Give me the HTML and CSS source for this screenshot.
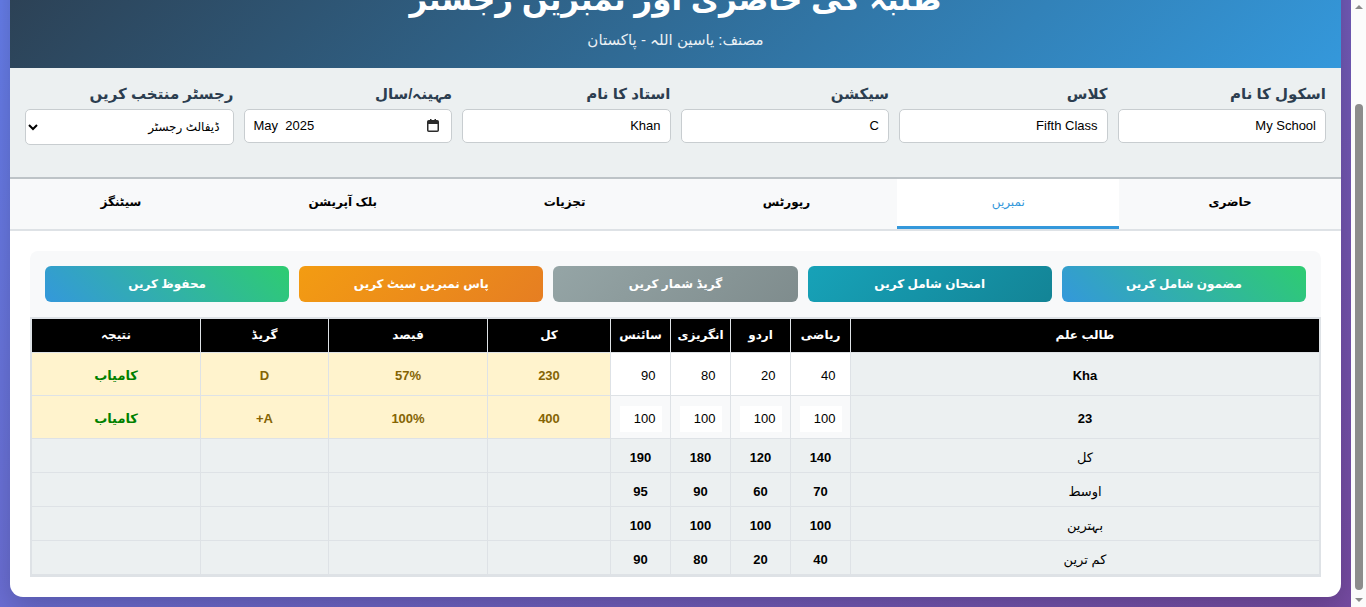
FILE: index.html
```html
<!DOCTYPE html>
<html lang="ur" dir="rtl">
<head>
<meta charset="utf-8">
<title>طلبہ کی حاضری اور نمبریں رجسٹر</title>
<link rel="stylesheet" href="styles.css">
</head>
<body>
<div class="viewport">
<div class="container">
  <header class="header">
    <h1>طلبہ کی حاضری اور نمبریں رجسٹر</h1>
    <p>مصنف: یاسین اللہ - پاکستان</p>
  </header>

  <section class="form-section">
    <div class="form-grid">
      <div class="form-group"><label>اسکول کا نام</label><input type="text" value="My School"></div>
      <div class="form-group"><label>کلاس</label><input type="text" value="Fifth Class"></div>
      <div class="form-group"><label>سیکشن</label><input type="text" value="C"></div>
      <div class="form-group"><label>استاد کا نام</label><input type="text" value="Khan"></div>
      <div class="form-group"><label>مہینہ/سال</label>
        <div class="month-field" dir="ltr"><span>May&nbsp; 2025</span>
          <svg class="cal" width="12" height="13" viewBox="0 0 12 13"><rect x="0.75" y="1.75" width="10.5" height="10.5" rx="1" fill="none" stroke="#2b2b2b" stroke-width="1.5"/><rect x="1" y="2" width="10" height="3" fill="#2b2b2b"/><rect x="3" y="0" width="1.5" height="3" fill="#2b2b2b"/><rect x="7.5" y="0" width="1.5" height="3" fill="#2b2b2b"/></svg>
        </div>
      </div>
      <div class="form-group"><label>رجسٹر منتخب کریں</label><select><option>ڈیفالٹ رجسٹر</option></select></div>
    </div>
  </section>

  <nav class="tabs">
    <button class="tab">حاضری</button>
    <button class="tab active">نمبریں</button>
    <button class="tab">رپورٹس</button>
    <button class="tab">تجزیات</button>
    <button class="tab">بلک آپریشن</button>
    <button class="tab">سیٹنگز</button>
  </nav>

  <main class="content">
    <div class="toolbar">
      <button class="btn btn-success">مضمون شامل کریں</button>
      <button class="btn btn-info">امتحان شامل کریں</button>
      <button class="btn btn-grey">گریڈ شمار کریں</button>
      <button class="btn btn-warning">پاس نمبریں سیٹ کریں</button>
      <button class="btn btn-success">محفوظ کریں</button>
    </div>

    <div class="table-wrap">
      <table class="marks">
        <colgroup>
          <col class="c-name"><col class="c-sub"><col class="c-sub"><col class="c-sub"><col class="c-sub">
          <col class="c-total"><col class="c-pct"><col class="c-grade"><col class="c-result">
        </colgroup>
        <thead>
          <tr><th>طالب علم</th><th>ریاضی</th><th>اردو</th><th>انگریزی</th><th>سائنس</th><th>کل</th><th>فیصد</th><th>گریڈ</th><th>نتیجہ</th></tr>
        </thead>
        <tbody>
          <tr class="data">
            <td class="name">Kha</td>
            <td class="mark"><input value="40"></td>
            <td class="mark"><input value="20"></td>
            <td class="mark"><input value="80"></td>
            <td class="mark"><input value="90"></td>
            <td class="calc">230</td><td class="calc">57%</td><td class="calc">D</td><td class="calc pass">کامیاب</td>
          </tr>
          <tr class="data even">
            <td class="name">23</td>
            <td class="mark"><input value="100"></td>
            <td class="mark"><input value="100"></td>
            <td class="mark"><input value="100"></td>
            <td class="mark"><input value="100"></td>
            <td class="calc">400</td><td class="calc">100%</td><td class="calc">A+</td><td class="calc pass">کامیاب</td>
          </tr>
          <tr class="summary"><td class="label">کل</td><td>140</td><td>120</td><td>180</td><td>190</td><td></td><td></td><td></td><td></td></tr>
          <tr class="summary"><td class="label">اوسط</td><td>70</td><td>60</td><td>90</td><td>95</td><td></td><td></td><td></td><td></td></tr>
          <tr class="summary"><td class="label">بہترین</td><td>100</td><td>100</td><td>100</td><td>100</td><td></td><td></td><td></td><td></td></tr>
          <tr class="summary"><td class="label">کم ترین</td><td>40</td><td>20</td><td>80</td><td>90</td><td></td><td></td><td></td><td></td></tr>
        </tbody>
      </table>
    </div>
  </main>
</div>
</div>
<div class="scrollbar" dir="ltr">
  <div class="arrow up"></div>
  <div class="track"><div class="thumb"></div></div>
  <div class="arrow down"></div>
</div>
</body>
</html>
```

FILE: styles.css
```css
* { box-sizing: border-box; }

html, body { margin: 0; height: 100%; }

body {
  font-family: "Liberation Sans", "DejaVu Sans", sans-serif;
  color: #2c3e50;
  display: flex;
  flex-direction: row-reverse;
  overflow: hidden;
}

.viewport {
  flex: 1;
  display: flex;
  flex-direction: column;
  justify-content: flex-end;
  overflow: hidden;
  padding: 10px;
  background: linear-gradient(135deg, #667eea 0%, #764ba2 100%);
}

.scrollbar {
  width: 15px;
  flex: none;
  background: #fbfbfb;
  display: flex;
  flex-direction: column;
  align-items: center;
}
.scrollbar .arrow {
  width: 0;
  height: 0;
  border-left: 4px solid transparent;
  border-right: 4px solid transparent;
  margin: 5px 0;
}
.scrollbar .arrow.up { border-bottom: 4px solid #8a8a8a; }
.scrollbar .arrow.down { border-top: 4px solid #8a8a8a; }
.scrollbar .track {
  flex: 1;
  width: 100%;
  display: flex;
  flex-direction: column;
  justify-content: flex-end;
  align-items: center;
  padding-bottom: 3px;
}
.scrollbar .thumb {
  width: 8px;
  height: 486px;
  border-radius: 4px;
  background: #8c8c8c;
}

.container {
  flex: none;
  background: #fff;
  border-radius: 13px;
  overflow: hidden;
  box-shadow: 0 10px 30px rgba(0,0,0,0.2);
}

.header {
  background: linear-gradient(135deg, #2c3e50 0%, #3498db 100%);
  color: #fff;
  text-align: center;
  padding: 40px 20px 19px;
}
.header h1 {
  margin: 0 0 13px;
  font-size: 31px;
  font-weight: bold;
}
.header p {
  margin: 0;
  font-size: 15px;
  opacity: 0.9;
}

.form-section {
  background: #ecf0f1;
  padding: 15px 15px 17px;
  border-bottom: 2px solid #bdc3c7;
}
.form-grid {
  display: grid;
  grid-template-columns: repeat(6, 1fr);
  gap: 10px;
}
.form-group {
  display: flex;
  flex-direction: column;
  margin-bottom: 15px;
}
.form-group label {
  font-weight: bold;
  font-size: 15px;
  color: #2c3e50;
  margin-bottom: 4px;
  line-height: 22px;
}
.form-group input,
.form-group select,
.month-field {
  height: 34px;
  border: 1px solid #c8cdd0;
  border-radius: 5px;
  background: #fff;
  padding: 0 9px;
  font-family: "Liberation Sans", "DejaVu Sans", sans-serif;
  font-size: 13px;
  color: #000;
}
.form-group select { height: 36px; font-size: 12px; }
.month-field {
  display: flex;
  align-items: center;
  justify-content: space-between;
  padding: 0 12px 0 9px;
}
.month-field .cal { display: block; }

.tabs {
  display: flex;
  background: #f8f9fa;
  border-bottom: 2px solid #dee2e6;
}
.tab {
  flex: 1;
  height: 50px;
  border: none;
  border-bottom: 3px solid transparent;
  background: transparent;
  font-family: "Liberation Sans", "DejaVu Sans", sans-serif;
  font-size: 12px;
  font-weight: bold;
  color: #000;
  padding: 0;
}
.tab.active {
  background: #fff;
  color: #3498db;
  font-weight: normal;
  border-bottom-color: #3498db;
}

.content { padding: 20px; }

.toolbar {
  display: grid;
  grid-template-columns: repeat(5, 1fr);
  gap: 10px;
  background: #f8f9fa;
  padding: 15px;
  border-radius: 8px 8px 0 0;
}
.btn {
  height: 36px;
  border: none;
  border-radius: 6px;
  color: #fff;
  font-family: "Liberation Sans", "DejaVu Sans", sans-serif;
  font-size: 12px;
  font-weight: bold;
}
.btn-success { background: linear-gradient(45deg, #3498db, #2ecc71); }
.btn-info { background: linear-gradient(135deg, #17a2b8, #138496); }
.btn-grey { background: linear-gradient(135deg, #95a5a6, #7f8c8d); }
.btn-warning { background: linear-gradient(135deg, #f39c12, #e67e22); }

.table-wrap {
  border: 2px solid #dee2e6;
  border-left-width: 1px;
  border-right-width: 1px;
}
.marks {
  width: 100%;
  border-collapse: collapse;
  table-layout: fixed;
  font-size: 13px;
}
.c-name { width: 469px; }
.c-sub { width: 60px; }
.c-total { width: 123px; }
.c-pct { width: 159px; }
.c-grade { width: 128px; }
.c-result { width: 169px; }

.marks th {
  background: #000;
  color: #fff;
  height: 34px;
  font-weight: bold;
  font-size: 12px;
  border: 1px solid #dee2e6;
  border-top: none;
  padding: 0 6px;
}
.marks td {
  border: 1px solid #dee2e6;
  text-align: center;
  padding: 0 6px;
  color: #000;
}
.marks tr.data td { height: 43px; padding-top: 3px; }
.marks td.name { background: #ecf0f1; font-weight: bold; }
.marks td.mark { background: #fff; padding: 0 8px; }
.marks tr.even td.mark { background: #f8f9fa; }
.marks td.mark input {
  width: 42px;
  height: 26px;
  border: none;
  background: #fff;
  font-family: "Liberation Sans", "DejaVu Sans", sans-serif;
  font-size: 13px;
  color: #000;
  padding: 0 6px;
  text-align: right;
  direction: rtl;
}
.marks td.calc {
  background: #fff3cd;
  color: #856404;
  font-weight: bold;
}
.marks td.calc.pass { color: #008000; }

.marks tr.summary td {
  height: 34px;
  background: #ecf0f1;
  font-weight: bold;
  padding-top: 3px;
}
.marks tr.summary td.label { font-weight: normal; }
```
